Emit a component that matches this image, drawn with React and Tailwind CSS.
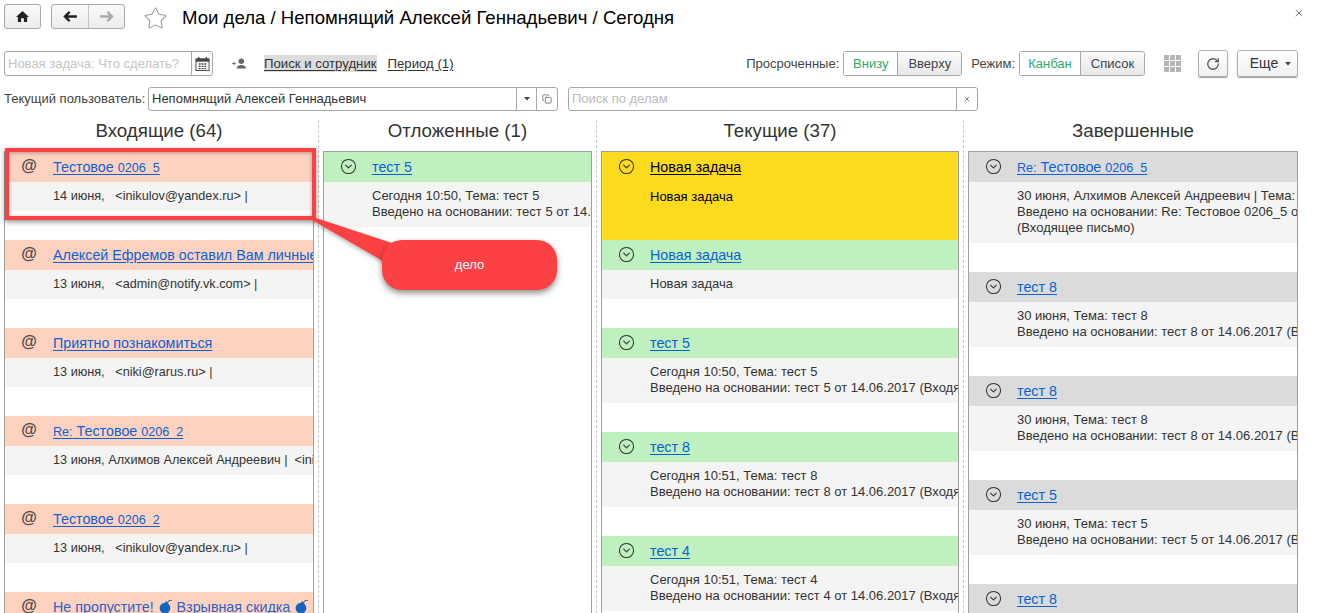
import { Star, RotateCw, X, CircleChevronDown, Copy } from 'lucide-react'

function Num({ children }) {
    return <span className="text-[12.6px]">{children}</span>
}

function Re() {
    return <span className="text-[12.6px]">Re:</span>
}

function Bomb() {
    return (
        <svg viewBox="0 0 14 14" className="inline-block w-[15px] h-[15px] align-[-2px]">
            <circle cx="6.5" cy="8.5" r="5" fill="#1565c0" />
            <rect x="6.5" y="2.5" width="3" height="2.5" fill="#1565c0" transform="rotate(35 8 4)" />
            <path d="M9.5 2.5 Q11 0.5 13 1.5" stroke="#555" fill="none" />
        </svg>
    )
}

const inbox = [
    { title: <>Тестовое <Num>0206_5</Num></>, lines: ['14 июня,   <inikulov@yandex.ru> |'] },
    { title: 'Алексей Ефремов оставил Вам личные сообщения', lines: ['13 июня,   <admin@notify.vk.com> |'] },
    { title: 'Приятно познакомиться', lines: ['13 июня,   <niki@rarus.ru> |'] },
    { title: <><Re /> Тестовое <Num>0206_2</Num></>, lines: ['13 июня, Алхимов Алексей Андреевич |  <inikulov@yandex.ru>'] },
    { title: <>Тестовое <Num>0206_2</Num></>, lines: ['13 июня,   <inikulov@yandex.ru> |'] },
    { title: <>Не пропустите! <Bomb /> Взрывная скидка <Bomb /></>, lines: [], plain: true },
]

const postponed = [
    { title: 'тест 5', lines: ['Сегодня 10:50, Тема: тест 5', 'Введено на основании: тест 5 от 14.06.2017'] },
]

const current = [
    { title: 'Новая задача', lines: ['Новая задача'], yellow: true },
    { title: 'Новая задача', lines: ['Новая задача'] },
    { title: 'тест 5', lines: ['Сегодня 10:50, Тема: тест 5', 'Введено на основании: тест 5 от 14.06.2017 (Входящее'] },
    { title: 'тест 8', lines: ['Сегодня 10:51, Тема: тест 8', 'Введено на основании: тест 8 от 14.06.2017 (Входящее'] },
    { title: 'тест 4', lines: ['Сегодня 10:51, Тема: тест 4', 'Введено на основании: тест 4 от 14.06.2017 (Входящее'] },
]

const done = [
    { title: <><Re /> Тестовое <Num>0206_5</Num></>, lines: ['30 июня, Алхимов Алексей Андреевич | Тема: Re: Тестовое', 'Введено на основании: Re: Тестовое 0206_5 от 14.06.2017', '(Входящее письмо)'] },
    { title: 'тест 8', lines: ['30 июня, Тема: тест 8', 'Введено на основании: тест 8 от 14.06.2017 (Входящее письмо)'] },
    { title: 'тест 8', lines: ['30 июня, Тема: тест 8', 'Введено на основании: тест 8 от 14.06.2017 (Входящее письмо)'] },
    { title: 'тест 5', lines: ['30 июня, Тема: тест 5', 'Введено на основании: тест 5 от 14.06.2017 (Входящее письмо)'] },
    { title: 'тест 8', lines: [] },
]

function Card({ item, kind }) {
    const head = {
        inbox: 'bg-[#fed2bf]',
        green: 'bg-[#bff0c0]',
        gray: 'bg-[#dbdbdb]',
    }[kind]

    if (item.yellow) {
        return (
            <div className="h-[88px] bg-[#fcda1e] text-black">
                <div className="h-[30px] flex items-center">
                    <div className="w-[48px] flex justify-center"><CircleChevronDown className="w-[17px] h-[17px] text-[#333] -mt-[2px]" strokeWidth={1.5} /></div>
                    <span className="pt-[1px] text-[14.3px] underline underline-offset-2">{item.title}</span>
                </div>
                <div className="pl-[48px] pt-[7px] text-[13px] leading-[16px]">{item.lines[0]}</div>
            </div>
        )
    }

    return (
        <div className="pb-[29px]">
            <div className={`h-[30px] flex items-center ${head}`}>
                <div className="w-[48px] shrink-0 flex justify-center">
                    {kind === 'inbox'
                        ? <span className="text-[16px] font-bold text-[#4a4a4a] -mt-[3px]">@</span>
                        : <CircleChevronDown className="w-[17px] h-[17px] text-[#333] -mt-[2px]" strokeWidth={1.5} />}
                </div>
                <span className={`pt-[1px] text-[14.3px] underline underline-offset-2 ${item.plain ? 'no-underline text-[#2a62c8]' : 'text-[#0b62d6]'}`}>{item.title}</span>
            </div>
            {item.lines.length > 0 && (
                <div className={`bg-[#f4f4f4] pl-[48px] pt-[6px] pb-[7px] leading-[16px] text-[#333] whitespace-pre ${kind === 'inbox' ? 'text-[12.7px]' : 'text-[13px]'}`}>
                    {item.lines.map((l, i) => <div key={i}>{l}</div>)}
                </div>
            )}
        </div>
    )
}

function Column({ title, items, kind, width }) {
    return (
        <div className={`${width} shrink-0 flex flex-col`}>
            <div className="h-[31px] pb-[8px] flex items-center justify-center text-[18.7px] text-[#333]">{title}</div>
            <div className="flex-1 border border-b-0 border-[#a0a0a0] overflow-hidden whitespace-nowrap">
                {items.map((item, i) => <Card key={i} item={item} kind={kind} />)}
            </div>
        </div>
    )
}

function Divider() {
    return <div className="mx-[4px] w-px border-l border-dashed border-[#c8c8c8]" />
}

function Segment({ left, right, lw, rw }) {
    return (
        <div className="h-[25px] flex border border-[#a8a8a8] rounded-[3px] text-[13px] overflow-hidden">
            <div className={`${lw} bg-white text-[#2fa86f] flex items-center justify-center border-r border-[#a8a8a8]`}>{left}</div>
            <div className={`${rw} bg-gradient-to-b from-[#fafafa] to-[#e8e8e8] text-[#444] flex items-center justify-center`}>{right}</div>
        </div>
    )
}

export default function App() {
    return (
        <div className="relative w-[1318px] h-[613px] overflow-hidden bg-white text-[#333] font-['Liberation_Sans',Arial,sans-serif]">
            {/* top bar */}
            <div className="h-[47px] pl-[4px] pt-[4px] flex items-start">
                <button className="w-[37px] h-[25px] border border-[#a8a8a8] rounded-[3px] bg-gradient-to-b from-[#fafafa] to-[#ececec] flex items-center justify-center">
                    <svg viewBox="0 0 16 14" className="w-[15px] h-[13px]"><path d="M8 1 L15 7.5 H13 V13 H9.5 V9 H6.5 V13 H3 V7.5 H1 Z" fill="#222" /></svg>
                </button>
                <div className="ml-[10px] w-[74px] h-[25px] border border-[#a8a8a8] rounded-[3px] bg-gradient-to-b from-[#fafafa] to-[#ececec] flex">
                    <div className="w-[37px] border-r border-[#c4c4c4] flex items-center justify-center">
                        <svg viewBox="0 0 16 12" className="w-[15px] h-[11px]"><path d="M7 1 L2 6 L7 11 M2 6 H15" stroke="#222" strokeWidth="2.6" fill="none" /></svg>
                    </div>
                    <div className="flex-1 flex items-center justify-center">
                        <svg viewBox="0 0 16 12" className="w-[15px] h-[11px]"><path d="M9 1 L14 6 L9 11 M14 6 H1" stroke="#aaa" strokeWidth="2.6" fill="none" /></svg>
                    </div>
                </div>
                <Star className="ml-[18px] mt-[2px] w-[25px] h-[25px] text-[#999]" strokeWidth={1} />
                <div className="ml-[14px] text-[18.6px] leading-[28px] text-black">Мои дела / Непомнящий Алексей Геннадьевич / Сегодня</div>
                <X className="absolute left-[1293px] top-[7px] w-[12px] h-[12px] text-[#555]" strokeWidth={1.5} />
            </div>

            {/* filters row */}
            <div className="h-[25px] mt-[4px] pl-[4px] flex items-center text-[13px]">
                <div className="w-[209px] h-[25px] border border-[#a8a8a8] rounded-[3px] flex">
                    <div className="flex-1 pl-[3px] flex items-center text-[#c4c4c4]">Новая задача: Что сделать?</div>
                    <div className="w-[21px] border-l border-[#a8a8a8] flex items-center justify-center">
                        <svg viewBox="0 0 16 16" className="w-[15px] h-[16px]">
                            <rect x="1" y="2.5" width="14" height="12.5" fill="none" stroke="#444" />
                            <rect x="1" y="2.5" width="14" height="3" fill="#444" />
                            <path d="M4 0.5 V3 M12 0.5 V3" stroke="#444" strokeWidth="1.4" />
                            <path d="M4 8 h2 M7 8 h2 M10 8 h2 M4 10.5 h2 M7 10.5 h2 M10 10.5 h2 M4 13 h2 M7 13 h2 M10 13 h2" stroke="#444" strokeWidth="1.4" />
                        </svg>
                    </div>
                </div>
                <svg viewBox="0 0 16 12" className="ml-[19px] w-[15px] h-[11px]">
                    <circle cx="10" cy="3.5" r="3" fill="#666" />
                    <path d="M5 11.5 Q5 7.5 10 7.5 Q15 7.5 15 11.5 Z" fill="#666" />
                    <path d="M0 6 h4 M2 4 v4" stroke="#666" strokeWidth="1" />
                </svg>
                <span className="ml-[17px] h-[17px] leading-[17px] text-[13.2px] bg-[#dcdcdc] underline underline-offset-2 text-[#333]">Поиск и сотрудник</span>
                <span className="ml-[11px] text-[13.2px] underline underline-offset-2 text-[#333]">Период (1)</span>

                <div className="ml-auto flex items-center text-[#444]">
                    <span className="mr-[4px]">Просроченные:</span>
                    <Segment left="Внизу" right="Вверху" lw="w-[54px]" rw="w-[63px]" />
                    <span className="ml-[9px] mr-[4px]">Режим:</span>
                    <Segment left="Канбан" right="Список" lw="w-[61px]" rw="w-[63px]" />
                    <div className="ml-[19px] grid grid-cols-3 gap-[1px] w-[17px]">
                        {Array.from({ length: 9 }).map((_, i) => <div key={i} className="h-[5px] bg-[#b5b5b5]" />)}
                    </div>
                    <button className="ml-[17px] w-[30px] h-[27px] border border-[#b0b0b0] rounded-[3px] shadow-[0_1px_1px_#999] bg-gradient-to-b from-white to-[#f0f0f0] flex items-center justify-center">
                        <RotateCw className="w-[14px] h-[14px] text-[#555]" strokeWidth={2.2} />
                    </button>
                    <button className="ml-[9px] mr-[20px] w-[61px] h-[27px] pl-[6px] border border-[#b0b0b0] rounded-[3px] shadow-[0_1px_1px_#999] bg-gradient-to-b from-white to-[#f0f0f0] flex items-center justify-center gap-[7px] text-[14px] text-[#333]">
                        Еще
                        <svg viewBox="0 0 6 4" className="w-[6px] h-[4px]"><path d="M0 0 H6 L3 3.5 Z" fill="#444" /></svg>
                    </button>
                </div>
            </div>

            {/* user row */}
            <div className="h-[24px] mt-[11px] pl-[4px] flex items-center text-[13px]">
                <span className="w-[144px] text-[#444] whitespace-nowrap">Текущий пользователь:</span>
                <div className="w-[410px] h-[24px] border border-[#a8a8a8] rounded-[3px] flex items-center">
                    <div className="flex-1 pl-[3px] text-[#333]">Непомнящий Алексей Геннадьевич</div>
                    <div className="w-[20px] h-full border-l border-[#a8a8a8] flex items-center justify-center">
                        <svg viewBox="0 0 6 4" className="w-[6px] h-[4px]"><path d="M0 0 H6 L3 3.5 Z" fill="#444" /></svg>
                    </div>
                    <div className="w-[21px] h-full border-l border-[#a8a8a8] flex items-center justify-center">
                        <Copy className="w-[10px] h-[10px] text-[#444]" strokeWidth={1.5} />
                    </div>
                </div>
                <div className="ml-[10px] w-[410px] h-[24px] border border-[#a8a8a8] rounded-[3px] flex items-center">
                    <div className="flex-1 pl-[3px] text-[#bbb]">Поиск по делам</div>
                    <div className="w-[21px] h-full border-l border-[#a8a8a8] flex items-center justify-center">
                        <X className="w-[8px] h-[8px] text-[#444]" strokeWidth={2} />
                    </div>
                </div>
            </div>

            {/* board */}
            <div className="h-[503px] mt-[9px] pl-[4px] flex">
                <Column title="Входящие (64)" items={inbox} kind="inbox" width="w-[310px]" />
                <Divider />
                <Column title="Отложенные (1)" items={postponed} kind="green" width="w-[269px]" />
                <Divider />
                <Column title="Текущие (37)" items={current} kind="green" width="w-[358px]" />
                <Divider />
                <Column title="Завершенные" items={done} kind="gray" width="w-[330px]" />
            </div>

            {/* callout over the board */}
            <div className="absolute left-[5px] top-[148px] w-[311px] h-[72px] border-[4px] border-[#fb4143] shadow-[0_2px_5px_rgba(0,0,0,0.45),inset_0_1px_4px_rgba(0,0,0,0.3)]" />
            <svg viewBox="0 0 100 60" className="absolute left-[310px] top-[214px] w-[100px] h-[60px] drop-shadow-[0_2px_2px_rgba(0,0,0,0.3)]">
                <polygon points="2,6 6,4 85,30 78,50" fill="#fb4143" />
            </svg>
            <div className="absolute left-[382px] top-[240px] w-[175px] h-[50px] rounded-[20px] bg-[#fb4143] shadow-[0_3px_6px_rgba(0,0,0,0.45)] flex items-center justify-center text-[13px] text-white">дело</div>
        </div>
    )
}
